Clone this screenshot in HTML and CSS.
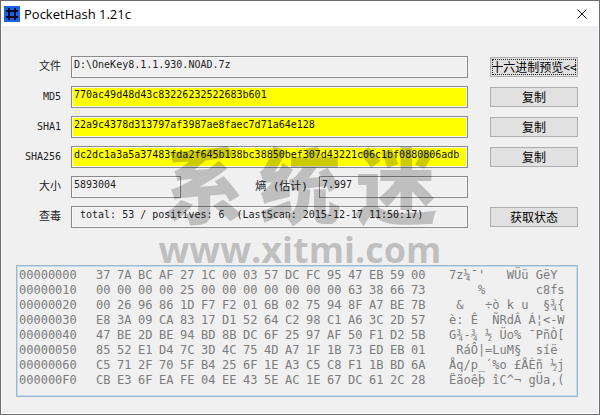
FILE: index.html
```html
<!DOCTYPE html>
<html lang="zh-CN">
<head>
<meta charset="utf-8">
<title>PocketHash 1.21c</title>
<link rel="stylesheet" href="styles.css">
</head>
<body>
<div class="window">
  <header class="titlebar">
    <svg class="logo" viewBox="0 0 16 16" aria-hidden="true">
      <rect width="16" height="16" fill="#1663e6"/>
      <path d="M5 2v12M11 2v12M2 5h12M2 11h12" stroke="#050b1c" stroke-width="2" fill="none"/>
    </svg>
    <h1 class="title">PocketHash 1.21c</h1>
    <button class="close" type="button" aria-label="关闭">
      <svg viewBox="0 0 10 10" aria-hidden="true"><path d="M0.5 0.5l9 9M9.5 0.5l-9 9" stroke="#111" fill="none"/></svg>
    </button>
  </header>
  <main class="content">
    <form class="form">
      <label for="file">文件</label>
      <input class="field" id="file" readonly value="D:\OneKey8.1.1.930.NOAD.7z">
      <button class="btn focused" type="button">十六进制预览&lt;&lt;</button>

      <label for="md5">MD5</label>
      <input class="field hash" id="md5" readonly value="770ac49d48d43c83226232522683b601">
      <button class="btn" type="button">复制</button>

      <label for="sha1">SHA1</label>
      <input class="field hash" id="sha1" readonly value="22a9c4378d313797af3987ae8faec7d71a64e128">
      <button class="btn" type="button">复制</button>

      <label for="sha256">SHA256</label>
      <input class="field hash" id="sha256" readonly value="dc2dc1a3a5a37483fda2f645b138bc38850bef307d43221c06c1bf0880806adb">
      <button class="btn" type="button">复制</button>

      <label for="size">大小</label>
      <div class="pair">
        <input class="field size" id="size" readonly value="5893004">
        <label for="entropy">熵 (估计)</label>
        <input class="field entropy" id="entropy" readonly value="7.997">
      </div>
      <span></span>

      <label for="scan">查毒</label>
      <input class="field" id="scan" readonly value=" total: 53 / positives: 6  (LastScan: 2015-12-17 11:50:17)">
      <button class="btn" type="button">获取状态</button>
    </form>
    <div class="dump">
      <table>
        <tbody>
          <tr><th>00000000</th><td>37</td><td>7A</td><td>BC</td><td>AF</td><td>27</td><td>1C</td><td>00</td><td>03</td><td>57</td><td>DC</td><td>FC</td><td>95</td><td>47</td><td>EB</td><td>59</td><td>00</td><td class="ascii">7z¼¯'   WÜü GëY</td></tr>
          <tr><th>00000010</th><td>00</td><td>00</td><td>00</td><td>00</td><td>25</td><td>00</td><td>00</td><td>00</td><td>00</td><td>00</td><td>00</td><td>00</td><td>63</td><td>38</td><td>66</td><td>73</td><td class="ascii">    %       c8fs</td></tr>
          <tr><th>00000020</th><td>00</td><td>26</td><td>96</td><td>86</td><td>1D</td><td>F7</td><td>F2</td><td>01</td><td>6B</td><td>02</td><td>75</td><td>94</td><td>8F</td><td>A7</td><td>BE</td><td>7B</td><td class="ascii"> &amp;   ÷ò k u  §¾{</td></tr>
          <tr><th>00000030</th><td>E8</td><td>3A</td><td>09</td><td>CA</td><td>83</td><td>17</td><td>D1</td><td>52</td><td>64</td><td>C2</td><td>98</td><td>C1</td><td>A6</td><td>3C</td><td>2D</td><td>57</td><td class="ascii">è: Ê  ÑRdÂ Á¦&lt;-W</td></tr>
          <tr><th>00000040</th><td>47</td><td>BE</td><td>2D</td><td>BE</td><td>94</td><td>BD</td><td>8B</td><td>DC</td><td>6F</td><td>25</td><td>97</td><td>AF</td><td>50</td><td>F1</td><td>D2</td><td>5B</td><td class="ascii">G¾-¾ ½ Üo% ¯PñÒ[</td></tr>
          <tr><th>00000050</th><td>85</td><td>52</td><td>E1</td><td>D4</td><td>7C</td><td>3D</td><td>4C</td><td>75</td><td>4D</td><td>A7</td><td>1F</td><td>1B</td><td>73</td><td>ED</td><td>EB</td><td>01</td><td class="ascii"> RáÔ|=LuM§  síë</td></tr>
          <tr><th>00000060</th><td>C5</td><td>71</td><td>2F</td><td>70</td><td>5F</td><td>B4</td><td>25</td><td>6F</td><td>1E</td><td>A3</td><td>C5</td><td>C8</td><td>F1</td><td>1B</td><td>BD</td><td>6A</td><td class="ascii">Åq/p_´%o £ÅÈñ ½j</td></tr>
          <tr><th>000000F0</th><td>CB</td><td>E3</td><td>6F</td><td>EA</td><td>FE</td><td>04</td><td>EE</td><td>43</td><td>5E</td><td>AC</td><td>1E</td><td>67</td><td>DC</td><td>61</td><td>2C</td><td>28</td><td class="ascii">Ëãoêþ îC^¬ gÜa,(</td></tr>
        </tbody>
      </table>
    </div>
  </main>
  <div class="watermark">
    <div class="brand"><span>系</span><span>统</span><span>迷</span></div>
    <div class="site">www.xitmi.com</div>
  </div>
</div>
</body>
</html>
```
FILE: styles.css
```css
* { box-sizing: border-box; }

body {
  margin: 0;
  background: #f0f0f0;
  font: 10px/12px "DejaVu Sans Mono", "Noto Sans CJK SC", monospace;
  color: #222;
}

.window {
  position: relative;
  display: flex;
  flex-direction: column;
  min-height: 100vh;
  border: 1px solid #6b6c70;
}

.titlebar {
  display: flex;
  align-items: center;
  height: 25px;
  padding: 0 12px 0 3px;
  background: #fff;
}

.logo { width: 16px; height: 16px; }

.title {
  flex: 1;
  margin: 0 0 0 4px;
  font: 13px/20px "Open Sans", sans-serif;
  color: #000;
}

.close {
  width: 10px;
  height: 10px;
  padding: 0;
  border: 0;
  background: none;
}

.close svg { display: block; width: 10px; height: 10px; }

.content {
  flex: 1;
  padding: 30px 20px 16px 14px;
  border: solid #fff;
  border-width: 0 1px 1px;
}

.form {
  display: grid;
  grid-template-columns: 45px 1fr 88px;
  grid-auto-rows: 22px;
  row-gap: 8px;
  align-items: center;
}

label {
  font-size: 11px;
  line-height: 18px;
  text-align: right;
  white-space: nowrap;
}

label[for^="md"], label[for^="sha"] { font-size: 10px; }

.field {
  min-width: 0;
  height: 22px;
  margin: 0 22px 0 10px;
  padding: 0 2px 6px;
  border: 1px solid #8a8a8a;
  border-radius: 0;
  outline: 0;
  background: #f0f0f0;
  box-shadow: inset 0 0 0 1px #f8f8f8;
  font: inherit;
  color: #222;
}

.hash { background: #ff0; color: #111; }

.pair {
  display: flex;
  align-items: center;
  justify-content: space-between;
  margin: 0 22px 0 10px;
}

.pair label { flex: 1; padding-right: 11px; }
.pair .field { margin: 0; }
.size { width: 110px; }
.entropy { width: 149px; }

.btn {
  height: 20px;
  padding: 0;
  border: 1px solid #adadad;
  border-radius: 0;
  background: #e1e1e1;
  font: 12px/16px "Noto Sans CJK SC", sans-serif;
  color: #000;
  white-space: nowrap;
}

.focused { outline: 1px dotted #222; outline-offset: -3px; }

.dump {
  margin-top: 37px;
  padding: 2px 2px 8px;
  border: 1px solid #9fb6cf;
  box-shadow: inset 0 0 0 1px #c5d9ef;
  overflow: hidden;
}

.dump table {
  border-collapse: collapse;
  font-size: 12px;
  line-height: 15px;
  color: #7c7c7c;
}

.dump th, .dump td { padding: 0; font-weight: normal; text-align: left; }
.dump th { min-width: 77px; width: 77px; }
.dump td { min-width: 21px; width: 21px; }
.dump .ascii { padding-left: 17px; white-space: pre; }

.watermark {
  position: absolute;
  top: 136px;
  left: 0;
  right: 0;
  display: flex;
  flex-direction: column;
  align-items: center;
  color: #000;
  opacity: 0.2;
  pointer-events: none;
}

.brand {
  display: flex;
  gap: 14px;
  font: 900 82px/90px "Noto Sans CJK SC", sans-serif;
}

.site { font: bold 36px/46px "Open Sans", sans-serif; }
```
